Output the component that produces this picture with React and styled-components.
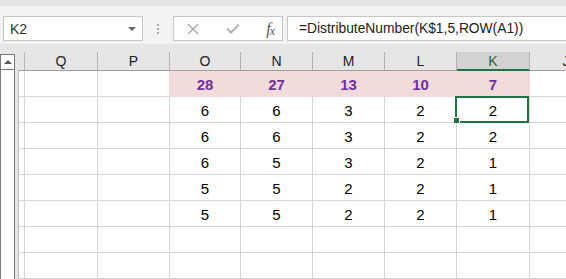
import React from "react";
import styled, { createGlobalStyle } from "styled-components";

const GlobalStyle = createGlobalStyle`
  html, body {
    margin: 0;
    padding: 0;
    background: #ffffff;
    font-family: "Liberation Sans", Arial, sans-serif;
    overflow: hidden;
  }
`;

const columns = [
  { name: "Q", width: 73 },
  { name: "P", width: 72 },
  { name: "O", width: 71 },
  { name: "N", width: 72 },
  { name: "M", width: 72 },
  { name: "L", width: 72 },
  { name: "K", width: 73 },
  { name: "J", width: 73 },
];

// values listed per column O, N, M, L, K
const totals = [28, 27, 13, 10, 7];
const rows = [
  [6, 6, 3, 2, 2],
  [6, 6, 3, 2, 2],
  [6, 5, 3, 2, 1],
  [5, 5, 2, 2, 1],
  [5, 5, 2, 2, 1],
  [],
  [],
];

const PINK = "#f2dcdb";
const GREEN = "#217346";

const Page = styled.div`
  width: 566px;
  height: 279px;
  overflow: hidden;
  display: flex;
  flex-direction: column;
`;

const TopStrip = styled.div`
  height: 6px;
  background: #e6e6e6;
`;

const Toolbar = styled.div`
  height: 38px;
  background: #f3f3f3;
  display: flex;
  align-items: flex-start;
  padding: 10px 0 0 3px;
  box-sizing: border-box;
`;

const NameBox = styled.div`
  width: 140px;
  height: 25px;
  box-sizing: border-box;
  border: 1px solid #c6c6c6;
  background: #fff;
  display: flex;
  align-items: center;
  justify-content: space-between;
  padding: 0 6px 0 6px;
  font-size: 14px;
  color: #333;
`;

const DropArrow = styled.span`
  width: 0;
  height: 0;
  border-left: 4px solid transparent;
  border-right: 4px solid transparent;
  border-top: 4px solid #6a6a6a;
`;

const Grip = styled.div`
  width: 2px;
  margin: 8px 14px 0 14px;
  display: flex;
  flex-direction: column;
  gap: 2px;
  span {
    width: 2px;
    height: 2px;
    background: #a8a8a8;
  }
`;

const ButtonBox = styled.div`
  width: 110px;
  height: 25px;
  box-sizing: border-box;
  border: 1px solid #c6c6c6;
  background: #fff;
  display: flex;
  align-items: center;
  justify-content: space-between;
  padding: 0 8px 0 13px;
`;

const Fx = styled.span`
  font-family: "Liberation Serif", "Times New Roman", serif;
  font-style: italic;
  font-size: 16px;
  color: #5a5a5a;
  letter-spacing: -1px;
  line-height: 1;
  sub {
    font-size: 12px;
    vertical-align: -1px;
  }
`;

const FormulaInput = styled.div`
  flex: 1;
  margin-left: 4px;
  height: 25px;
  box-sizing: border-box;
  border: 1px solid #c6c6c6;
  border-right: none;
  background: #fff;
  display: flex;
  align-items: center;
  padding-left: 11px;
  font-size: 13.8px;
  color: #222;
  white-space: nowrap;
`;

const Band = styled.div`
  height: 8px;
  background: #e6e6e6;
`;

const SheetArea = styled.div`
  flex: 1;
  display: flex;
  overflow: hidden;
`;

const LeftPane = styled.div`
  width: 18px;
  flex-shrink: 0;
  display: flex;
  background: #e6e6e6;
`;

const ScrollBar = styled.div`
  width: 15px;
  margin-top: 2px;
  box-sizing: border-box;
  border: 1px solid #7a7a7a;
  border-bottom: none;
  background: #fff;
`;

const ScrollButton = styled.div`
  height: 15px;
  box-sizing: border-box;
  border-bottom: 1px solid #7a7a7a;
  display: flex;
  align-items: center;
  justify-content: center;
  &::before {
    content: "";
    width: 0;
    height: 0;
    border-left: 4px solid transparent;
    border-right: 4px solid transparent;
    border-bottom: 4px solid #5a5a5a;
  }
`;

const Grid = styled.div`
  display: grid;
  grid-template-columns: 7px ${columns.map((c) => `${c.width}px`).join(" ")};
  grid-template-rows: 19px repeat(8, 26px);
  flex-shrink: 0;
`;

const Corner = styled.div`
  background: #e6e6e6;
  border-right: 1px solid #b8b8b8;
  border-bottom: 1px solid #a0a0a0;
  box-sizing: border-box;
`;

const ColHeader = styled.div`
  box-sizing: border-box;
  background: ${({ $active }) => ($active ? "#d2d2d2" : "#e6e6e6")};
  border-right: 1px solid #b3b3b3;
  border-bottom: ${({ $active }) =>
    $active ? `2px solid ${GREEN}` : "1px solid #a0a0a0"};
  color: ${({ $active }) => ($active ? "#1d6b40" : "#222")};
  font-size: 14px;
  display: flex;
  align-items: center;
  justify-content: center;
  padding-top: ${({ $active }) => ($active ? "1px" : "0")};
`;

const RowHeader = styled.div`
  box-sizing: border-box;
  background: #fff;
  border-left: 1px solid #b8b8b8;
  border-right: 1px solid #d4d4d4;
  border-bottom: 1px solid #d4d4d4;
`;

const Cell = styled.div`
  position: relative;
  box-sizing: border-box;
  background: ${({ $fill }) => $fill || "#fff"};
  border-right: 1px solid ${({ $fill, $edge }) => $edge || $fill || "#d4d4d4"};
  border-bottom: 1px solid ${({ $fill }) => $fill || "#d4d4d4"};
  display: flex;
  align-items: center;
  justify-content: center;
  font-size: 15px;
  font-weight: ${({ $bold }) => ($bold ? 700 : 400)};
  color: ${({ $bold }) => ($bold ? "#7030a0" : "#000")};
  padding-top: 1px;
`;

const Selection = styled.div`
  position: absolute;
  top: -1px;
  left: -2px;
  right: 0;
  bottom: -1px;
  border: 2px solid ${GREEN};
  z-index: 2;
  pointer-events: none;
`;

const FillHandle = styled.div`
  position: absolute;
  left: -3px;
  bottom: -2px;
  width: 6px;
  height: 6px;
  box-sizing: border-box;
  background: ${GREEN};
  border-top: 1px solid #fff;
  border-right: 1px solid #fff;
  z-index: 3;
`;

const CrossIcon = () => (
  <svg width="12" height="12" viewBox="0 0 12 12">
    <path d="M1 1 L11 11 M11 1 L1 11" stroke="#a6a6a6" strokeWidth="1.3" fill="none" />
  </svg>
);

const CheckIcon = () => (
  <svg width="14" height="11" viewBox="0 0 14 11">
    <path d="M1 5.5 L5 9.5 L13 1.5" stroke="#b4b4b4" strokeWidth="2" fill="none" />
  </svg>
);

const App = () => {
  const dataCols = ["O", "N", "M", "L", "K"];

  const renderRow = (values, rowIndex, isTotal) => {
    return [
      <RowHeader key={`rh-${rowIndex}`} />,
      ...columns.map((col) => {
        const idx = dataCols.indexOf(col.name);
        const value = idx >= 0 ? values[idx] : undefined;
        const fill = isTotal && idx >= 0 ? PINK : undefined;
        const edge = isTotal && col.name === "P" ? PINK : undefined;
        const selected = rowIndex === 1 && col.name === "K";
        return (
          <Cell key={`${col.name}-${rowIndex}`} $fill={fill} $edge={edge} $bold={isTotal}>
            {value}
            {selected ? (
              <Selection>
                <FillHandle />
              </Selection>
            ) : null}
          </Cell>
        );
      }),
    ];
  };

  return (
    <Page>
      <GlobalStyle />
      <TopStrip />
      <Toolbar>
        <NameBox>
          K2
          <DropArrow />
        </NameBox>
        <Grip>
          <span />
          <span />
          <span />
        </Grip>
        <ButtonBox>
          <CrossIcon />
          <CheckIcon />
          <Fx>
            f<sub>x</sub>
          </Fx>
        </ButtonBox>
        <FormulaInput>=DistributeNumber(K$1,5,ROW(A1))</FormulaInput>
      </Toolbar>
      <Band />
      <SheetArea>
        <LeftPane>
          <ScrollBar>
            <ScrollButton />
          </ScrollBar>
        </LeftPane>
        <Grid>
          <Corner />
          {columns.map((col) => (
            <ColHeader key={col.name} $active={col.name === "K"}>
              {col.name}
            </ColHeader>
          ))}
          {renderRow(totals, 0, true)}
          {rows.map((values, i) => renderRow(values, i + 1, false))}
        </Grid>
      </SheetArea>
    </Page>
  );
};

export default App;
